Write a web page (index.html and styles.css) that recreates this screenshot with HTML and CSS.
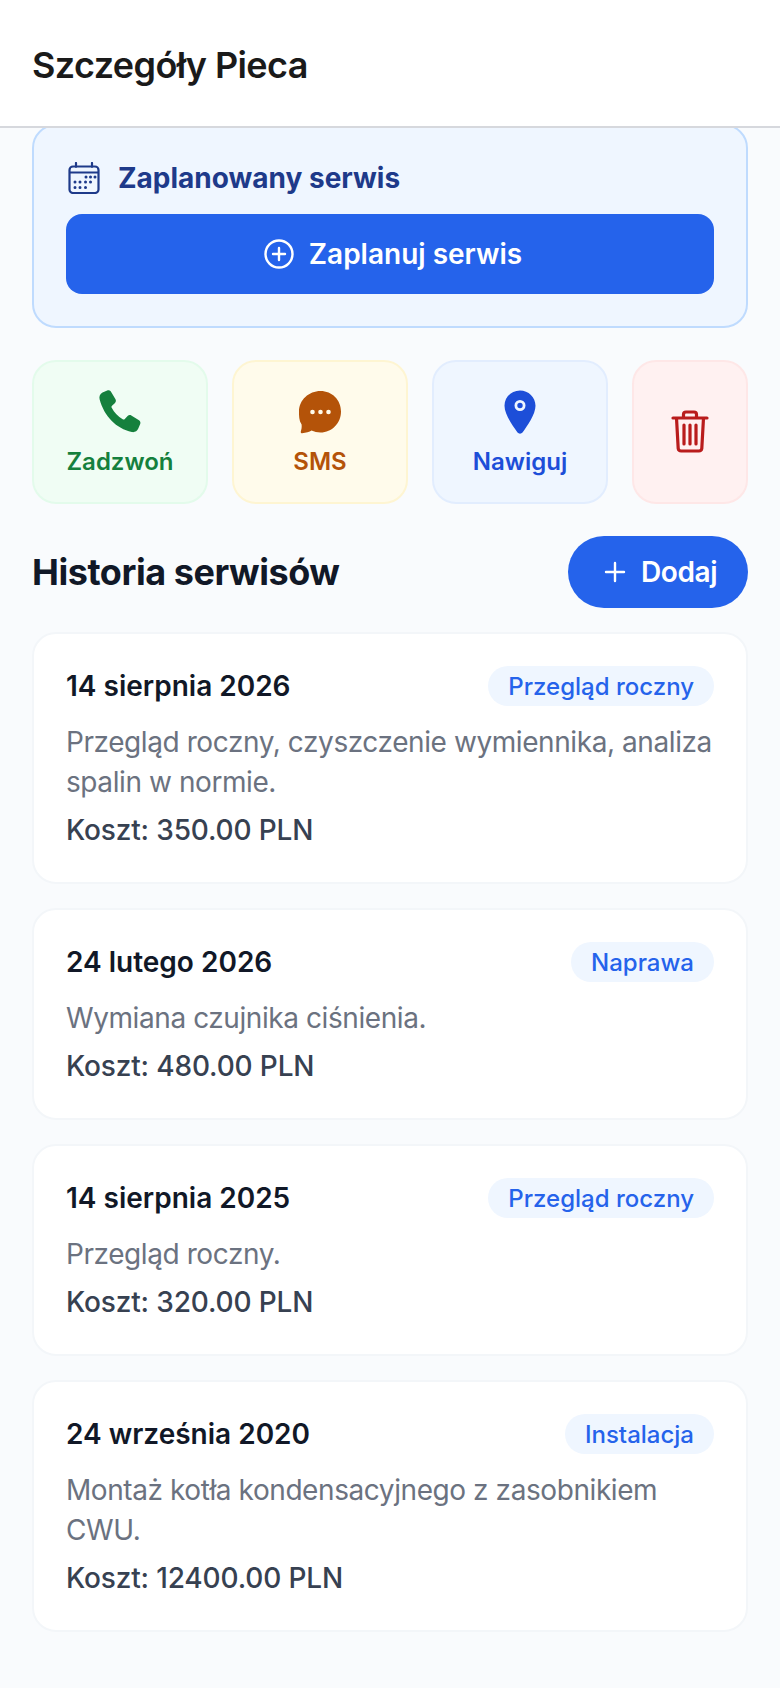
FILE: index.html
```html
<!DOCTYPE html>
<html lang="pl">
	<head>
		<meta charset="utf-8" />
		<title>Szczegóły Pieca</title>
		<link rel="stylesheet" href="styles.css">
	</head>
	<body>
		<header class="topbar">
			<h1>Szczegóły Pieca</h1>
		</header>

		<main class="content">
			<section class="planned">
				<div class="planned_title">
					<svg class="icon_cal" viewBox="0 0 32 32" fill="none" stroke="currentColor" stroke-width="2.2" stroke-linecap="round" stroke-linejoin="round">
						<path d="M8 1v4M24 1v4M1.500 8a3.500 3.500 0 0 1 3.500-3.500h22A3.500 3.500 0 0 1 30.500 8v19.500a3.500 3.500 0 0 1-3.500 3.500H5a3.500 3.500 0 0 1-3.500-3.500zM1.500 10.500h29"/>
						<path stroke-width="3" d="M18 15h.01M22.500 15h.01M27 15h0M7 20h.01M12 20h.01M17.500 20h.01M22.500 20h.01M7 25.500h.01M12 25.500h.01M17.500 25.500h.01"/>
					</svg>
					<span>Zaplanowany serwis</span>
				</div>
				<button class="btn_plan">
					<svg class="icon_plus" viewBox="0 0 30 30" fill="none" stroke="currentColor" stroke-width="2.400" stroke-linecap="round">
						<circle cx="15" cy="15" r="13.500"/>
						<path d="M15 9v12M9 15h12"/>
					</svg>
					<span>Zaplanuj serwis</span>
				</button>
			</section>

			<section class="actions">
				<div class="action action_call">
					<svg class="action_icon" viewBox="0 0 44 44"><path fill="currentColor" d="M4.500 2.600 9.200.600c1.400-.6 3-.1 3.800 1.200l4.500 7.400c.7 1.200.5 2.700-.5 3.700l-3 2.800c-.6.600-.7 1.400-.3 2.100 2.500 4.700 6.400 8.800 11 11.500.7.400 1.500.3 2.100-.3l2.800-3c1-1 2.500-1.300 3.700-.5l7.700 4.700c1.300.8 1.800 2.400 1.200 3.800l-1.900 4.500c-1.100 2.600-3.700 4.100-6.500 3.500C18.300 38.600 6.200 26.500 1.600 9.300.900 6.600 2.100 3.800 4.500 2.600z"/></svg>
					<span>Zadzwoń</span>
				</div>
				<div class="action action_sms">
					<svg class="action_icon" viewBox="0 0 44 44"><path fill="currentColor" d="M22.500 1C34 1 43 9.900 43 21.500S34 42.500 22.500 42.500c-3.200 0-6.200-.7-9-2-1.800 1.200-5.800 2.500-9.300 2.700-1.100 0-1.700-.9-1.400-1.800.7-1.700 1.100-4.400.8-6.800C.9 30.500 1 25.700 1 21.500 1 9.900 11 1 22.500 1z"/><circle cx="14.500" cy="22" r="2.300" fill="#fffbeb"/><circle cx="22.500" cy="22" r="2.300" fill="#fffbeb"/><circle cx="30.500" cy="22" r="2.300" fill="#fffbeb"/></svg>
					<span>SMS</span>
				</div>
				<div class="action action_nav">
					<svg class="action_icon" viewBox="0 0 44 44"><path fill="currentColor" fill-rule="evenodd" d="M22 .500c8.500 0 15.500 6.800 15.500 15.200 0 8.600-8.300 20.400-13 26.800-1.200 1.500-3.800 1.500-5 0C14.800 36.100 6.500 24.300 6.500 15.700 6.500 7.300 13.500.500 22 .500zm0 9.500a5.500 5.500 0 1 0 0 11 5.500 5.500 0 0 0 0-11zm0 2.800a2.700 2.700 0 1 1 0 5.400 2.700 2.700 0 0 1 0-5.400z"/></svg>
					<span>Nawiguj</span>
				</div>
				<div class="action action_del">
					<svg class="action_icon" viewBox="0 0 38 44" fill="none" stroke="currentColor" stroke-width="3.200" stroke-linecap="round" stroke-linejoin="round">
						<path d="M2 8h34M12.500 8V4.500a2.500 2.500 0 0 1 2.500-2.500h8a2.500 2.500 0 0 1 2.500 2.500V8M5.500 8l1.700 30.500a3 3 0 0 0 3 2.500h17.600a3 3 0 0 0 3-2.500L32.500 8M13 15v19M19 15v19M25 15v19"/>
					</svg>
				</div>
			</section>

			<div class="history_head">
				<h2>Historia serwisów</h2>
				<button class="btn_add">
					<svg class="icon_add" viewBox="0 0 22 22" fill="none" stroke="currentColor" stroke-width="2.400" stroke-linecap="round"><path d="M11 2v18M2 11h18"/></svg>
					<span>Dodaj</span>
				</button>
			</div>

			<article class="card">
				<div class="card_top">
					<span class="card_date">14 sierpnia 2026</span>
					<span class="badge">Przegląd roczny</span>
				</div>
				<p class="card_desc">Przegląd roczny, czyszczenie wymiennika, analiza spalin w normie.</p>
				<p class="card_cost">Koszt: 350.00 PLN</p>
			</article>

			<article class="card">
				<div class="card_top">
					<span class="card_date">24 lutego 2026</span>
					<span class="badge">Naprawa</span>
				</div>
				<p class="card_desc">Wymiana czujnika ciśnienia.</p>
				<p class="card_cost">Koszt: 480.00 PLN</p>
			</article>

			<article class="card">
				<div class="card_top">
					<span class="card_date">14 sierpnia 2025</span>
					<span class="badge">Przegląd roczny</span>
				</div>
				<p class="card_desc">Przegląd roczny.</p>
				<p class="card_cost">Koszt: 320.00 PLN</p>
			</article>

			<article class="card">
				<div class="card_top">
					<span class="card_date">24 września 2020</span>
					<span class="badge">Instalacja</span>
				</div>
				<p class="card_desc">Montaż kotła kondensacyjnego z zasobnikiem CWU.</p>
				<p class="card_cost">Koszt: 12400.00 PLN</p>
			</article>
		</main>
	</body>
</html>
```

FILE: styles.css
```css
* {
	box-sizing: border-box;
}
html, body {
	margin: 0;
	height: 100%;
}
body {
	width: 780px;
	height: 1688px;
	overflow: hidden;
	background-color: #f9fbfd;
	font-family: "Inter", "Liberation Sans", sans-serif;
}
button {
	font-family: inherit;
	border: 0;
}

/** header **/
.topbar {
	position: relative;
	z-index: 2;
	height: 128px;
	padding: 3px 32px 0;
	display: flex;
	align-items: center;
	background-color: #fff;
	border-bottom: 2px solid #d6d8dd;
}
.topbar h1 {
	margin: 0;
	font-size: 36px;
	font-weight: 600;
	letter-spacing: -0.6px;
	color: #1a1a1a;
}

/** list is scrolled a little under the header **/
.content {
	padding: 0 32px;
	margin-top: -4px;
}

/** planned service **/
.planned {
	padding: 32px;
	background-color: #eff6ff;
	border: 2px solid #bfdbfe;
	border-radius: 24px;
}
.planned_title {
	height: 40px;
	display: flex;
	align-items: center;
	gap: 18px;
	padding-left: 2px;
	color: #1e3a8a;
	font-size: 28px;
	font-weight: 700;
}
.icon_cal {
	width: 32px;
	height: 32px;
}
.btn_plan {
	width: 100%;
	height: 80px;
	margin-top: 16px;
	padding: 0 0 0 6px;
	display: flex;
	align-items: center;
	justify-content: center;
	gap: 15px;
	color: #fff;
	background-color: #2563eb;
	border-radius: 16px;
	font-size: 28px;
	font-weight: 600;
}
.icon_plus {
	width: 30px;
	height: 30px;
}

/** quick actions **/
.actions {
	display: flex;
	gap: 24px;
	margin-top: 32px;
}
.action {
	flex: 1;
	height: 144px;
	padding-top: 28px;
	display: flex;
	flex-direction: column;
	align-items: center;
	gap: 13px;
	border: 2px solid;
	border-radius: 24px;
	font-size: 24px;
	font-weight: 600;
}
.action_icon {
	width: 44px;
	height: 44px;
}
.action_call {
	color: #15803d;
	background-color: #f0fdf4;
	border-color: #e3fbeb;
}
.action_sms {
	color: #b45309;
	background-color: #fffbeb;
	border-color: #fef5d2;
}
.action_nav {
	color: #1d4ed8;
	background-color: #eff6ff;
	border-color: #e2edfe;
}
.action_del {
	flex: 0 0 116px;
	padding-top: 0;
	justify-content: center;
	color: #b91c1c;
	background-color: #fff1f1;
	border-color: #fee7e7;
}

/** history **/
.history_head {
	display: flex;
	align-items: center;
	justify-content: space-between;
	margin-top: 32px;
	margin-bottom: 24px;
}
.history_head h2 {
	margin: 0;
	font-size: 36px;
	font-weight: 700;
	letter-spacing: -0.45px;
	color: #111827;
}
.btn_add {
	height: 72px;
	width: 180px;
	padding: 0 0 0 36px;
	display: flex;
	align-items: center;
	gap: 15px;
	color: #fff;
	background-color: #2563eb;
	border-radius: 36px;
	font-size: 28px;
	font-weight: 600;
	letter-spacing: -0.4px;
}
.icon_add {
	width: 22px;
	height: 22px;
}

.card {
	margin-bottom: 24px;
	padding: 32px;
	background-color: #fff;
	border: 2px solid #f3f6f9;
	border-radius: 24px;
}
.card_top {
	display: flex;
	align-items: center;
	justify-content: space-between;
}
.card_date {
	font-size: 28px;
	font-weight: 600;
	color: #111827;
}
.badge {
	height: 40px;
	padding: 0 20px;
	display: flex;
	align-items: center;
	color: #2563eb;
	background-color: #eff6ff;
	border-radius: 20px;
	font-size: 24px;
	font-weight: 500;
}
.card_desc {
	margin: 16px 0 0;
	font-size: 28px;
	line-height: 40px;
	letter-spacing: -0.42px;
	color: #6b7280;
}
.card_cost {
	margin: 8px 0 0;
	font-size: 28px;
	line-height: 40px;
	font-weight: 500;
	letter-spacing: -0.15px;
	color: #374151;
}
```
